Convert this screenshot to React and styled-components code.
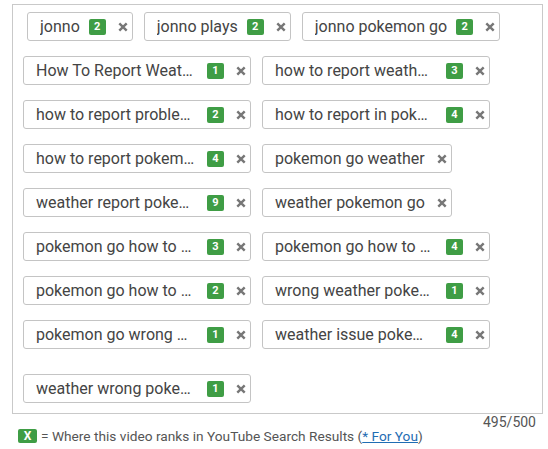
import React from "react";
import styled, { createGlobalStyle } from "styled-components";

const Global = createGlobalStyle`
  html, body { margin: 0; padding: 0; background: #fff; }
  body { font-family: Roboto, "Liberation Sans", Arial, sans-serif; }
`;

const Page = styled.div`
  width: 548px;
  height: 449px;
  padding-top: 4px;
  box-sizing: border-box;
`;

const Box = styled.div`
  margin-left: 12px;
  width: 531px;
  height: 410px;
  box-sizing: border-box;
  border: 1px solid #c9c9c9;
  padding: 7px 0 0 10px;
`;

const FirstRow = styled.div`
  display: flex;
  gap: 11px;
  padding-left: 4px;
  margin-bottom: 15px;
`;

const Wrap = styled.div`
  display: flex;
  flex-wrap: wrap;
  column-gap: 11px;
  row-gap: 15px;
`;

const Tag = styled.div`
  display: flex;
  align-items: center;
  height: 29px;
  box-sizing: border-box;
  border: 1px solid #c4c4c4;
  border-radius: 3px;
  padding: 0 4px 0 12px;
  margin-top: ${(p) => (p.$extra ? "10px" : "0")};
  background: #fff;
`;

const Label = styled.span`
  font-size: 16px;
  color: #444;
  white-space: nowrap;
  overflow: hidden;
  width: ${(p) => (p.$fixed ? "162px" : "auto")};
`;

const Badge = styled.span`
  display: inline-flex;
  align-items: center;
  justify-content: center;
  width: 17px;
  height: 16px;
  margin-left: 9px;
  border-radius: 2px;
  background: #3f9d45;
  color: #fff;
  font-size: 11px;
  font-weight: 700;
`;

const Close = styled.span`
  display: inline-flex;
  width: 10px;
  height: 10px;
  margin-left: 12px;
  svg { display: block; }
`;

const Counter = styled.div`
  width: 536px;
  text-align: right;
  font-size: 14px;
  line-height: 14px;
  height: 14px;
  color: #555;
  margin-top: 1px;
`;

const Footer = styled.div`
  display: flex;
  align-items: center;
  height: 14px;
  margin-left: 18px;
  font-size: 13.7px;
  line-height: 14px;
  color: #555;
`;

const Key = styled.span`
  display: inline-flex;
  align-items: center;
  justify-content: center;
  width: 19px;
  height: 14px;
  border-radius: 2px;
  background: #3f9d45;
  color: #fff;
  font-size: 12px;
  font-weight: 700;
  margin-right: 4px;
`;

const Link = styled.a`
  color: #1f6db3;
  text-decoration: underline;
`;

const X = () => (
  <Close>
    <svg width="10" height="10" viewBox="0 0 10 10">
      <path d="M1.3 1.3 L8.7 8.7 M8.7 1.3 L1.3 8.7" stroke="#777" strokeWidth="2.4" strokeLinecap="butt" />
    </svg>
  </Close>
);

const TagItem = ({ label, n, fixed, extra }) => (
  <Tag $extra={extra}>
    <Label $fixed={fixed}>{label}</Label>
    {n != null && <Badge>{n}</Badge>}
    <X />
  </Tag>
);

const first = [
  { label: "jonno", n: 2 },
  { label: "jonno plays", n: 2 },
  { label: "jonno pokemon go", n: 2 },
];

const rest = [
  { label: "How To Report Weat…", n: 1, fixed: true },
  { label: "how to report weath…", n: 3, fixed: true },
  { label: "how to report proble…", n: 2, fixed: true },
  { label: "how to report in pok…", n: 4, fixed: true },
  { label: "how to report pokem…", n: 4, fixed: true },
  { label: "pokemon go weather" },
  { label: "weather report poke…", n: 9, fixed: true },
  { label: "weather pokemon go" },
  { label: "pokemon go how to …", n: 3, fixed: true },
  { label: "pokemon go how to …", n: 4, fixed: true },
  { label: "pokemon go how to …", n: 2, fixed: true },
  { label: "wrong weather poke…", n: 1, fixed: true },
  { label: "pokemon go wrong …", n: 1, fixed: true },
  { label: "weather issue poke…", n: 4, fixed: true },
  { label: "weather wrong poke…", n: 1, fixed: true, extra: true },
];

export default function App() {
  return (
    <Page>
      <Global />
      <Box>
        <FirstRow>
          {first.map((t, i) => (
            <TagItem key={i} {...t} />
          ))}
        </FirstRow>
        <Wrap>
          {rest.map((t, i) => (
            <TagItem key={i} {...t} />
          ))}
        </Wrap>
      </Box>
      <Counter>495/500</Counter>
      <Footer>
        <Key>X</Key>
        <span>
          = Where this video ranks in YouTube Search Results (<Link href="#">* For You</Link>)
        </span>
      </Footer>
    </Page>
  );
}
